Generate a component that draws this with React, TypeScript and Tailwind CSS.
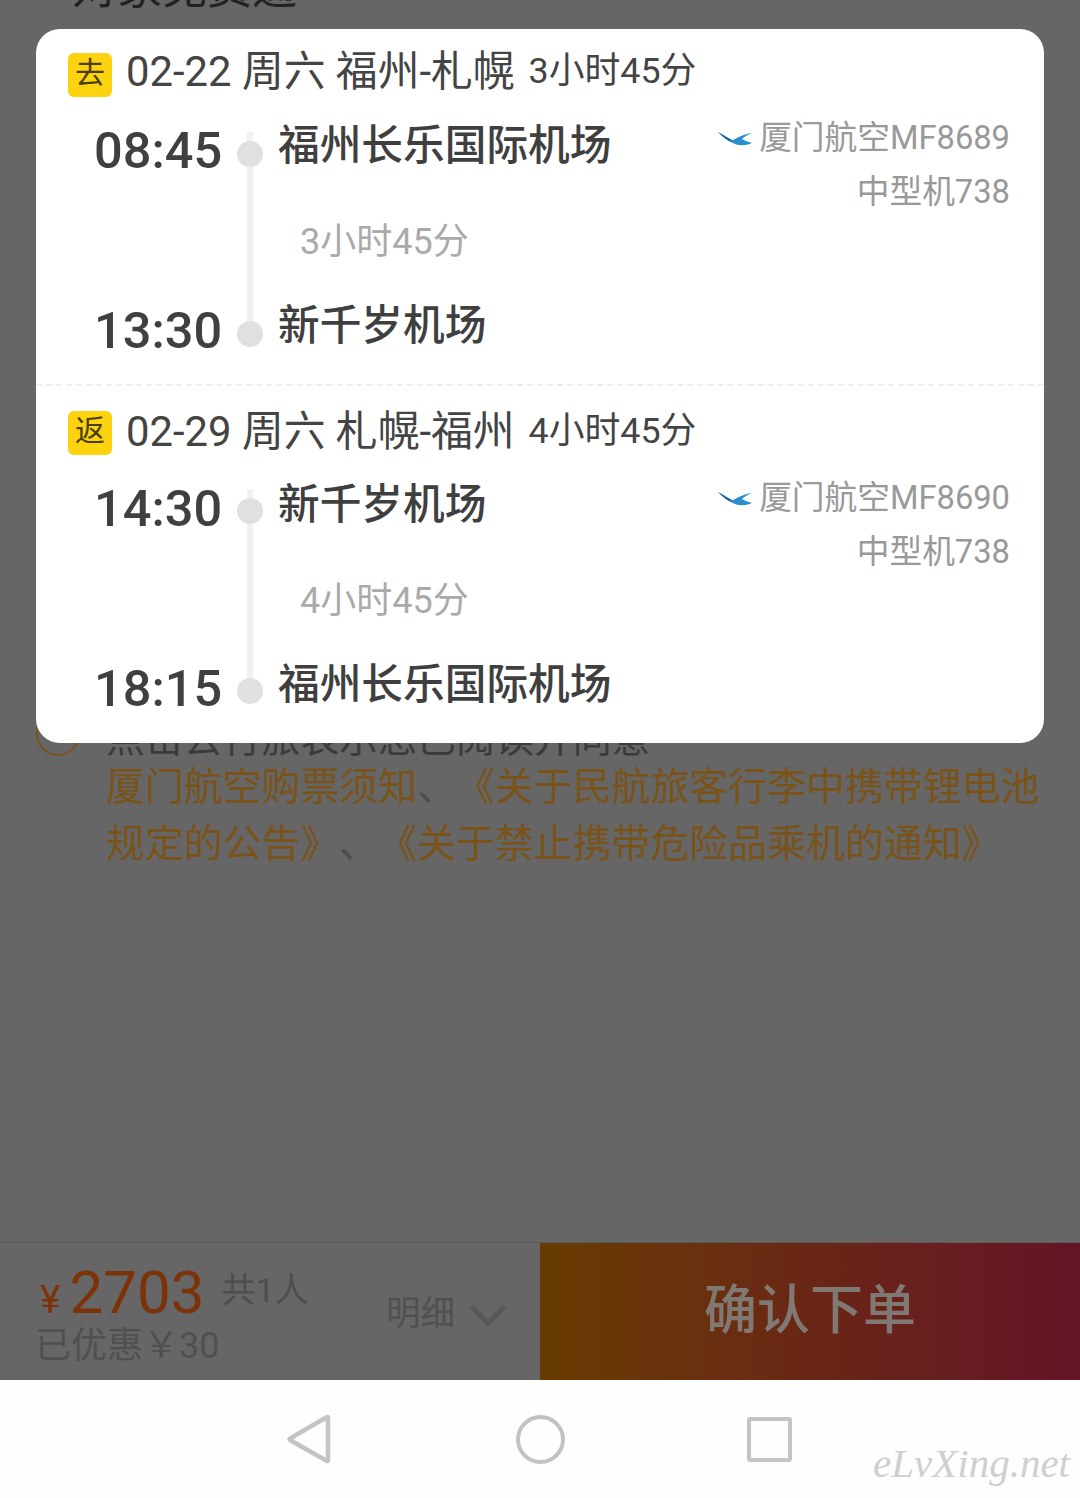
const fontStack = "font-['Roboto','Noto_Sans_CJK_SC',sans-serif]";

const legs = [
  {
    tag: "去",
    title: "02-22 周六 福州-札幌",
    total: "3小时45分",
    depTime: "08:45",
    depName: "福州长乐国际机场",
    arrTime: "13:30",
    arrName: "新千岁机场",
    flight: "厦门航空MF8689",
  },
  {
    tag: "返",
    title: "02-29 周六 札幌-福州",
    total: "4小时45分",
    depTime: "14:30",
    depName: "新千岁机场",
    arrTime: "18:15",
    arrName: "福州长乐国际机场",
    flight: "厦门航空MF8690",
  },
];

function Bird() {
  return (
    <svg width="36" height="20" viewBox="0 0 36 20" className="mr-[5px] mt-[1px]">
      <path d="M0 3 C6 6 10 10 15 11 C19 9 25 5 34 4 C29 6 26 8 24 10 C27 12 31 13 34 14 C27 17 20 17 15 14 C9 12 4 7 0 3 Z" fill="#2a8fd0" />
      <path d="M0 3 C4 5 8 8 12 10 L14 13 C9 11 4 7 0 3 Z" fill="#1d5f94" />
    </svg>
  );
}

function Leg({ leg, first }: { leg: (typeof legs)[number]; first: boolean }) {
  return (
    <div className={first ? "pt-[24px] pb-[37px]" : "pt-[25px] pb-[39px]"}>
      <div className="flex items-center h-[44px] pl-[32px] text-[#444]">
        <div className="w-[44px] h-[44px] rounded-[6px] bg-[#fdd20e] flex items-center justify-center text-[30px] leading-none text-[#4a3f08] pb-[4px]">
          {leg.tag}
        </div>
        <span className={`ml-[14px] text-[41.8px] leading-none whitespace-pre ${first ? "-mt-[6px]" : "-mt-[2px]"}`}>{leg.title}</span>
        <span className={`ml-[14px] text-[35.8px] leading-none ${first ? "-mt-[6px]" : "-mt-[2px]"}`}>{leg.total}</span>
      </div>

      <div className={`flex h-[215px] pl-[58px] pr-[34px] ${first ? "mt-[35px]" : "mt-[34px]"}`}>
        <div className={`w-[129px] flex flex-col justify-between text-[50.5px] leading-[50px] font-medium text-[#404040] ${first ? "" : "translate-y-[1px]"}`}>
          <div className="-mt-[6px]">{leg.depTime}</div>
          <div className="-mb-[9px]">{leg.arrTime}</div>
        </div>

        <div className="relative w-[26px] ml-[14px] flex flex-col justify-between items-center pt-[9px]">
          <div className="absolute top-0 bottom-[10px] left-[10px] w-[6px] bg-[#f1f1f1]" />
          <div className="relative w-[26px] h-[26px] rounded-full bg-[#e0e0e0]" />
          <div className="relative w-[26px] h-[26px] rounded-full bg-[#e0e0e0]" />
        </div>

        <div className={`flex-1 ml-[15px] flex flex-col justify-between text-[41.7px] leading-[42px] text-[#3f3f3f] ${first ? "" : "translate-y-[2px]"}`}>
          <div className="-mt-[7px] font-medium">{leg.depName}</div>
          <div className="pl-[22px] mt-[12px] text-[36px] leading-[40px] text-[#aaaaaa]">{leg.total}</div>
          <div className="font-medium">{leg.arrName}</div>
        </div>

        <div className={`flex flex-col items-end text-[32.7px] leading-[54px] text-[#999999] -mt-[21px] ${first ? "" : "translate-y-[3px]"}`}>
          <div className="flex items-center">
            <Bird />
            <span>{leg.flight}</span>
          </div>
          <div>中型机738</div>
        </div>
      </div>
    </div>
  );
}

export default function App() {
  return (
    <div className={`relative w-[1080px] h-[1498px] overflow-hidden bg-[#666666] flex flex-col ${fontStack}`}>
      {/* page behind the dimmed overlay */}
      <div className="flex-1 overflow-hidden">
        <div className="pl-[72px] -mt-[34px] text-[45px] leading-[45px] text-[#222]">对家免费通</div>
        <div className="flex mt-[703px] pl-[36px]">
          <div className="w-[44px] h-[44px] rounded-full border-2 border-[#7a5318] shrink-0 -mt-[2px]" />
          <div className="ml-[26px] text-[38.9px] text-[#7a5318] whitespace-nowrap [text-spacing-trim:space-all]">
            <div className="leading-[50px] h-[44px] text-[#3b3b3b]">点击去行旅表示您已阅读并同意</div>
            <div className="leading-[57px]">
              厦门航空购票须知<span className="text-[#4c4c4c]">、</span>《关于民航旅客行李中携带锂电池
            </div>
            <div className="leading-[57px]">
              规定的公告》<span className="text-[#4c4c4c]">、</span>《关于禁止携带危险品乘机的通知》
            </div>
          </div>
        </div>
      </div>

      {/* bottom order bar */}
      <div className="h-[138px] flex border-t border-[#5a5a5a] shrink-0">
        <div className="w-[540px] flex items-center">
          <div className="pl-[35px] w-[386px]">
            <div className="flex items-baseline h-[70px]">
              <span className="ml-[5px] text-[39px] leading-none text-[#7d3309]">¥</span>
              <span className="ml-[9px] text-[60px] leading-[70px] text-[#7d3309]">2703</span>
              <span className="ml-[17px] text-[34px] text-[#4e4e4e] relative -top-[11px]">共1人</span>
            </div>
            <div className="text-[36px] leading-[40px] text-[#505050] -mt-[2px]">已优惠￥30</div>
          </div>
          <span className="text-[34.5px] text-[#505050] mt-[5px]">明细</span>
          <svg width="38" height="24" viewBox="0 0 38 24" className="ml-[14px] mt-[8px]">
            <path d="M4 4 L19 19 L34 4" fill="none" stroke="#585858" strokeWidth="5" strokeLinecap="round" strokeLinejoin="round" />
          </svg>
        </div>
        <div className="flex-1 bg-gradient-to-r from-[#683c00] via-[#6a2615] to-[#641426] flex items-center justify-center text-[53px] font-medium text-[#807873]">
          确认下单
        </div>
      </div>

      {/* android nav bar */}
      <div className="relative h-[118px] bg-[#fefefe] shrink-0 flex items-center justify-center">
        <div className="flex items-center gap-[182px] -ml-[1px]">
          <svg width="46" height="52" viewBox="0 0 46 52" className="-translate-x-[2px]">
            <path d="M41 4 L4 25.5 Q3 26 4 27 L41 48 Q42 48 42 47 L42 5 Q42 4 41 4 Z" fill="none" stroke="#c4c4c4" strokeWidth="4.5" strokeLinejoin="round" />
          </svg>
          <div className="w-[49px] h-[49px] rounded-full border-[4px] border-[#c2c2c2]" />
          <div className="w-[45px] h-[45px] rounded-[3px] border-[4px] border-[#c4c4c4]" />
        </div>
        <span className="absolute right-[10px] bottom-[14px] font-['Liberation_Serif',serif] italic text-[41px] leading-none text-[#cfcfcf]">
          eLvXing.net
        </span>
      </div>

      {/* flight detail popup */}
      <div className="absolute left-[36px] top-[29px] w-[1008px] bg-white rounded-[24px]">
        <Leg leg={legs[0]} first />
        <div className="border-t-2 border-dashed border-[#eeeeee]" />
        <Leg leg={legs[1]} first={false} />
      </div>
    </div>
  );
}
